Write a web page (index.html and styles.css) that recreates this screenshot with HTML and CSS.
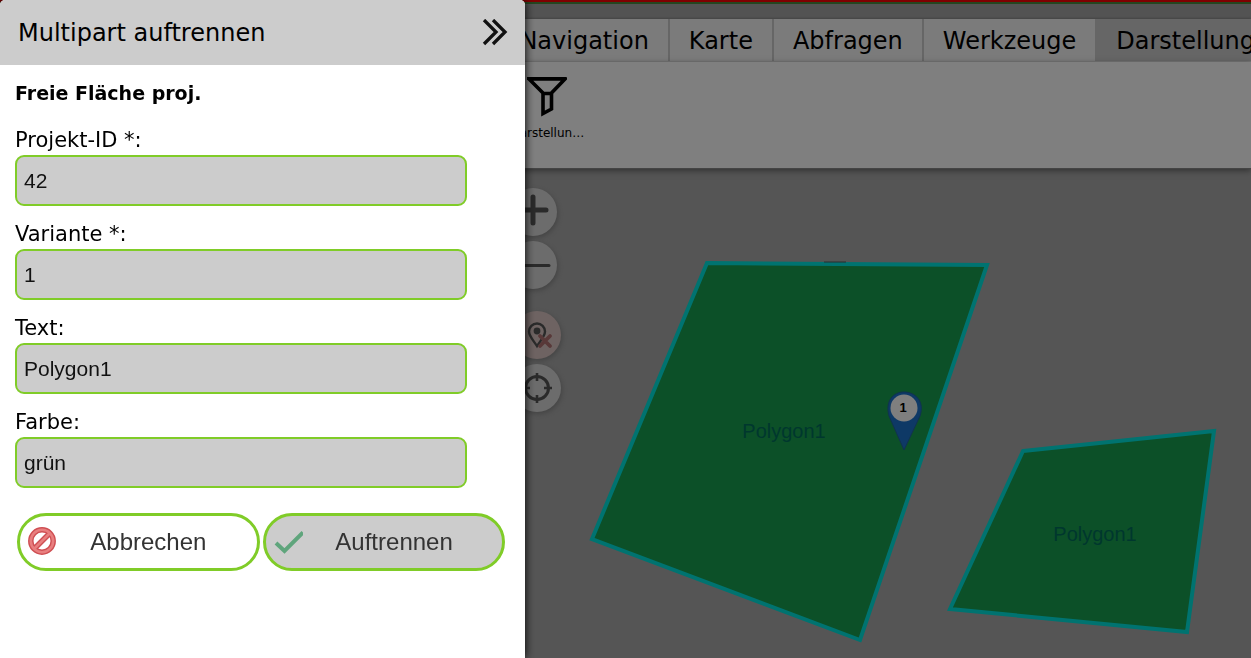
FILE: index.html
```html
<!DOCTYPE html>
<html lang="de">
<head>
<meta charset="utf-8">
<meta name="viewport" content="width=device-width, initial-scale=1">
<title>Multipart auftrennen</title>
<link rel="stylesheet" href="styles.css">
</head>
<body>
<div class="app">
  <div class="brand-bar"></div>
  <nav class="tabs">
    <button class="tab" type="button">Navigation</button>
    <button class="tab" type="button">Karte</button>
    <button class="tab" type="button">Abfragen</button>
    <button class="tab" type="button">Werkzeuge</button>
    <button class="tab tab-active" type="button">Darstellung</button>
  </nav>
  <div class="ribbon">
    <button class="tool" type="button">
      <svg class="tool-icon" viewBox="0 0 40 40" aria-hidden="true">
        <path d="M2 2H38L24.500 16V32L16 36.500V16Z M16 16.500H24" fill="none" stroke="#000" stroke-width="3.600"/>
        <path d="M0 1.500H39" stroke="#000" stroke-width="3"/>
      </svg>
      <span>Darstellun…</span>
    </button>
  </div>
  <main class="map">
    <svg class="map-canvas" viewBox="0 169 1251 489" preserveAspectRatio="xMinYMin slice" role="img" aria-label="Karte">
      <g class="area">
        <path d="M707 263L987 265L860 640L592 539Z"/>
        <path d="M1023 451L1214 431L1187 632L950 609Z"/>
      </g>
      <path d="M824 262H846" stroke="#505c5c" stroke-width="1"/>
      <g class="area-label">
        <text x="784" y="438">Polygon1</text>
        <text x="1095" y="541">Polygon1</text>
      </g>
      <path d="M904 450L889 416C885 401 893 392 904 392S925 401 920 416Z" fill="#1c73cd" stroke="#2263a0" stroke-width="1"/>
      <circle cx="904" cy="408" r="13.5" fill="#fff"/>
      <text class="pin-label" x="903" y="412">1</text>
    </svg>
    <div class="map-controls">
      <div class="control-group">
        <button class="round" type="button" aria-label="Vergrößern">
          <svg viewBox="0 0 48 48"><path d="M24 9V35M11 22H37" stroke="#555" stroke-width="5" stroke-linecap="round"/></svg>
        </button>
        <button class="round" type="button" aria-label="Verkleinern">
          <svg viewBox="0 0 48 48"><path d="M8 24.500H40" stroke="#555" stroke-width="3" stroke-linecap="round"/></svg>
        </button>
      </div>
      <div class="control-group control-group-lower">
        <button class="round round-alert" type="button" aria-label="Markierung entfernen">
          <svg viewBox="0 0 48 48">
            <path d="M24 35C20 29 16 25 16 20.500A8 8 0 0 1 32 20.500C32 25 28 29 24 35Z" fill="none" stroke="#555" stroke-width="2.400"/>
            <circle cx="24" cy="20" r="3.400" fill="#555"/>
            <path d="M27 25L37 35M37 25L27 35" stroke="#b07070" stroke-width="3.800" stroke-linecap="round"/>
          </svg>
        </button>
        <button class="round" type="button" aria-label="Position">
          <svg viewBox="0 0 48 48">
            <circle cx="24" cy="24" r="11.5" fill="none" stroke="#555" stroke-width="3"/>
            <path d="M24 9V17M24 31V39M9 24H17M31 24H39" stroke="#555" stroke-width="2.600"/>
          </svg>
        </button>
      </div>
    </div>
  </main>
</div>
<div class="backdrop"></div>
<section class="panel" aria-labelledby="panel-title">
  <header class="panel-header">
    <h1 class="panel-title" id="panel-title">Multipart auftrennen</h1>
    <button class="collapse" type="button" aria-label="Schließen">
      <svg viewBox="0 0 26 28"><path d="M2 1L14 13L2 25M11 1L23 13L11 25" fill="none" stroke="#111" stroke-width="3.300"/></svg>
    </button>
  </header>
  <form class="panel-body">
    <h2 class="layer">Freie Fläche proj.</h2>
    <div class="field"><label for="projekt">Projekt-ID *:</label><input id="projekt" type="text" value="42"></div>
    <div class="field"><label for="variante">Variante *:</label><input id="variante" type="text" value="1"></div>
    <div class="field"><label for="text">Text:</label><input id="text" type="text" value="Polygon1"></div>
    <div class="field"><label for="farbe">Farbe:</label><input id="farbe" type="text" value="grün"></div>
    <div class="actions">
      <button class="action" type="button">
        <svg class="action-icon" viewBox="0 0 30 30" aria-hidden="true">
          <g fill="none" stroke="#cf4f53" stroke-width="5.500"><circle cx="15" cy="14" r="11.2"/><path d="M7.500 21.500L22.500 6.500"/></g>
          <g fill="none" stroke="#e87f7f" stroke-width="2.600"><circle cx="15" cy="14" r="11.2"/><path d="M7.500 21.500L22.500 6.500"/></g>
        </svg>
        <span class="action-text">Abbrechen</span>
      </button>
      <button class="action action-primary" type="button">
        <svg class="action-icon" viewBox="0 0 30 30" aria-hidden="true"><path d="M3 16L11.500 24L30 5.500" fill="none" stroke="#5fa57c" stroke-width="4"/></svg>
        <span class="action-text">Auftrennen</span>
      </button>
    </div>
  </form>
</section>
</body>
</html>
```

FILE: styles.css
```css
* { box-sizing: border-box; }

body {
  margin: 0;
  height: 100vh;
  overflow: hidden;
  font-family: Verdana, "DejaVu Sans", sans-serif;
  color: #000;
}

button { font: inherit; color: inherit; padding: 0; border: 0; background: none; cursor: pointer; }

.app {
  --content-start: 40%;
  height: 100%;
  display: flex;
  flex-direction: column;
  background: #a6a6a6;
}

.brand-bar {
  flex: none;
  height: 4px;
  margin-bottom: 15px;
  border-top: 2px solid #f00;
  border-bottom: 2px solid #4a8c40;
}

.tabs {
  flex: none;
  display: flex;
  height: 43px;
  padding-left: var(--content-start);
  overflow: hidden;
  background: #f6f6f6;
  border-bottom: 1px solid #ededed;
  box-shadow: 0 -1px 2px #888;
}

.tab {
  flex: none;
  padding: 2px 19px 0;
  border-right: 2px solid #ccc;
  font-size: 24px;
  line-height: 40px;
}

.tab-active { background: #ccc; }

.ribbon {
  flex: none;
  height: 107px;
  padding: 15px 0 0 var(--content-start);
  background: #fff;
  border-bottom: 1px solid #888;
  box-shadow: 0 2px 6px #666;
  z-index: 1;
}

.tool {
  display: flex;
  flex-direction: column;
  align-items: center;
  gap: 8px;
  margin-left: 10px;
  font-size: 12px;
  line-height: 16px;
}

.tool-icon { width: 40px; height: 40px; }

.map { flex: 1; position: relative; overflow: hidden; background: #aaa; }

.map-canvas { display: block; width: 100%; height: 100%; }
.area { fill: #18a050; stroke: #00e6e0; stroke-width: 4; }
.area-label { fill: #006f5c; font-family: "Liberation Sans", Arial, sans-serif; font-size: 20px; text-anchor: middle; }
.pin-label { font-family: "Liberation Sans", Arial, sans-serif; font-size: 13px; font-weight: bold; text-anchor: middle; }

.map-controls {
  position: absolute;
  top: 19px;
  left: calc(var(--content-start) + 9px);
  display: grid;
  gap: 22px;
}

.control-group { display: grid; gap: 5px; }
.control-group-lower { padding-left: 4px; }

.round {
  width: 48px;
  height: 48px;
  border-radius: 50%;
  background: #d8d8d8;
  box-shadow: 1px 2px 5px #888;
}

.round-alert { background: #dcc6c4; }
.round svg { display: block; }

.backdrop { position: fixed; inset: 0; z-index: 2; background: rgb(0 0 0 / 50%); }

.panel {
  position: fixed;
  inset: 0 auto 0 0;
  z-index: 3;
  width: 42%;
  overflow: hidden;
  border-radius: 5px 5px 0 0;
  background: #fff;
  box-shadow: 0 0 10px #000;
}

.panel-header {
  display: flex;
  align-items: center;
  justify-content: space-between;
  height: 65px;
  padding: 0 17px 0 18px;
  background: #ccc;
}

.panel-title { margin: 0; font-size: 24px; font-weight: normal; line-height: 32px; }
.collapse { width: 26px; height: 28px; }
.collapse svg { display: block; }

.panel-body { display: flex; flex-direction: column; gap: 14px; padding: 15px; }
.layer { margin: 0; font-size: 19px; line-height: 26px; padding-bottom: 6px; }

.field { display: flex; flex-direction: column; padding-right: 43px; }
.field label { font-size: 21px; line-height: 29px; }
.field input {
  width: 100%;
  height: 51px;
  padding: 0 7px;
  border: 2px solid #80cc28;
  border-radius: 9px;
  background: #ccc;
  color: #111;
  font-family: "Liberation Sans", Arial, sans-serif;
  font-size: 21px;
}

.actions { display: flex; gap: 3px; padding: 11px 5px 0 2px; }

.action {
  flex: 1;
  display: flex;
  align-items: center;
  height: 58px;
  padding: 0 9px 0 7px;
  border: 3px solid #80cc28;
  border-radius: 29px;
  background: #fff;
  color: #333;
  font-family: "Liberation Sans", Arial, sans-serif;
  font-size: 24px;
}

.action-primary { background: #ccc; }
.action-icon { flex: none; width: 30px; height: 30px; }
.action-text { flex: 1; padding-right: 8px; }
```
